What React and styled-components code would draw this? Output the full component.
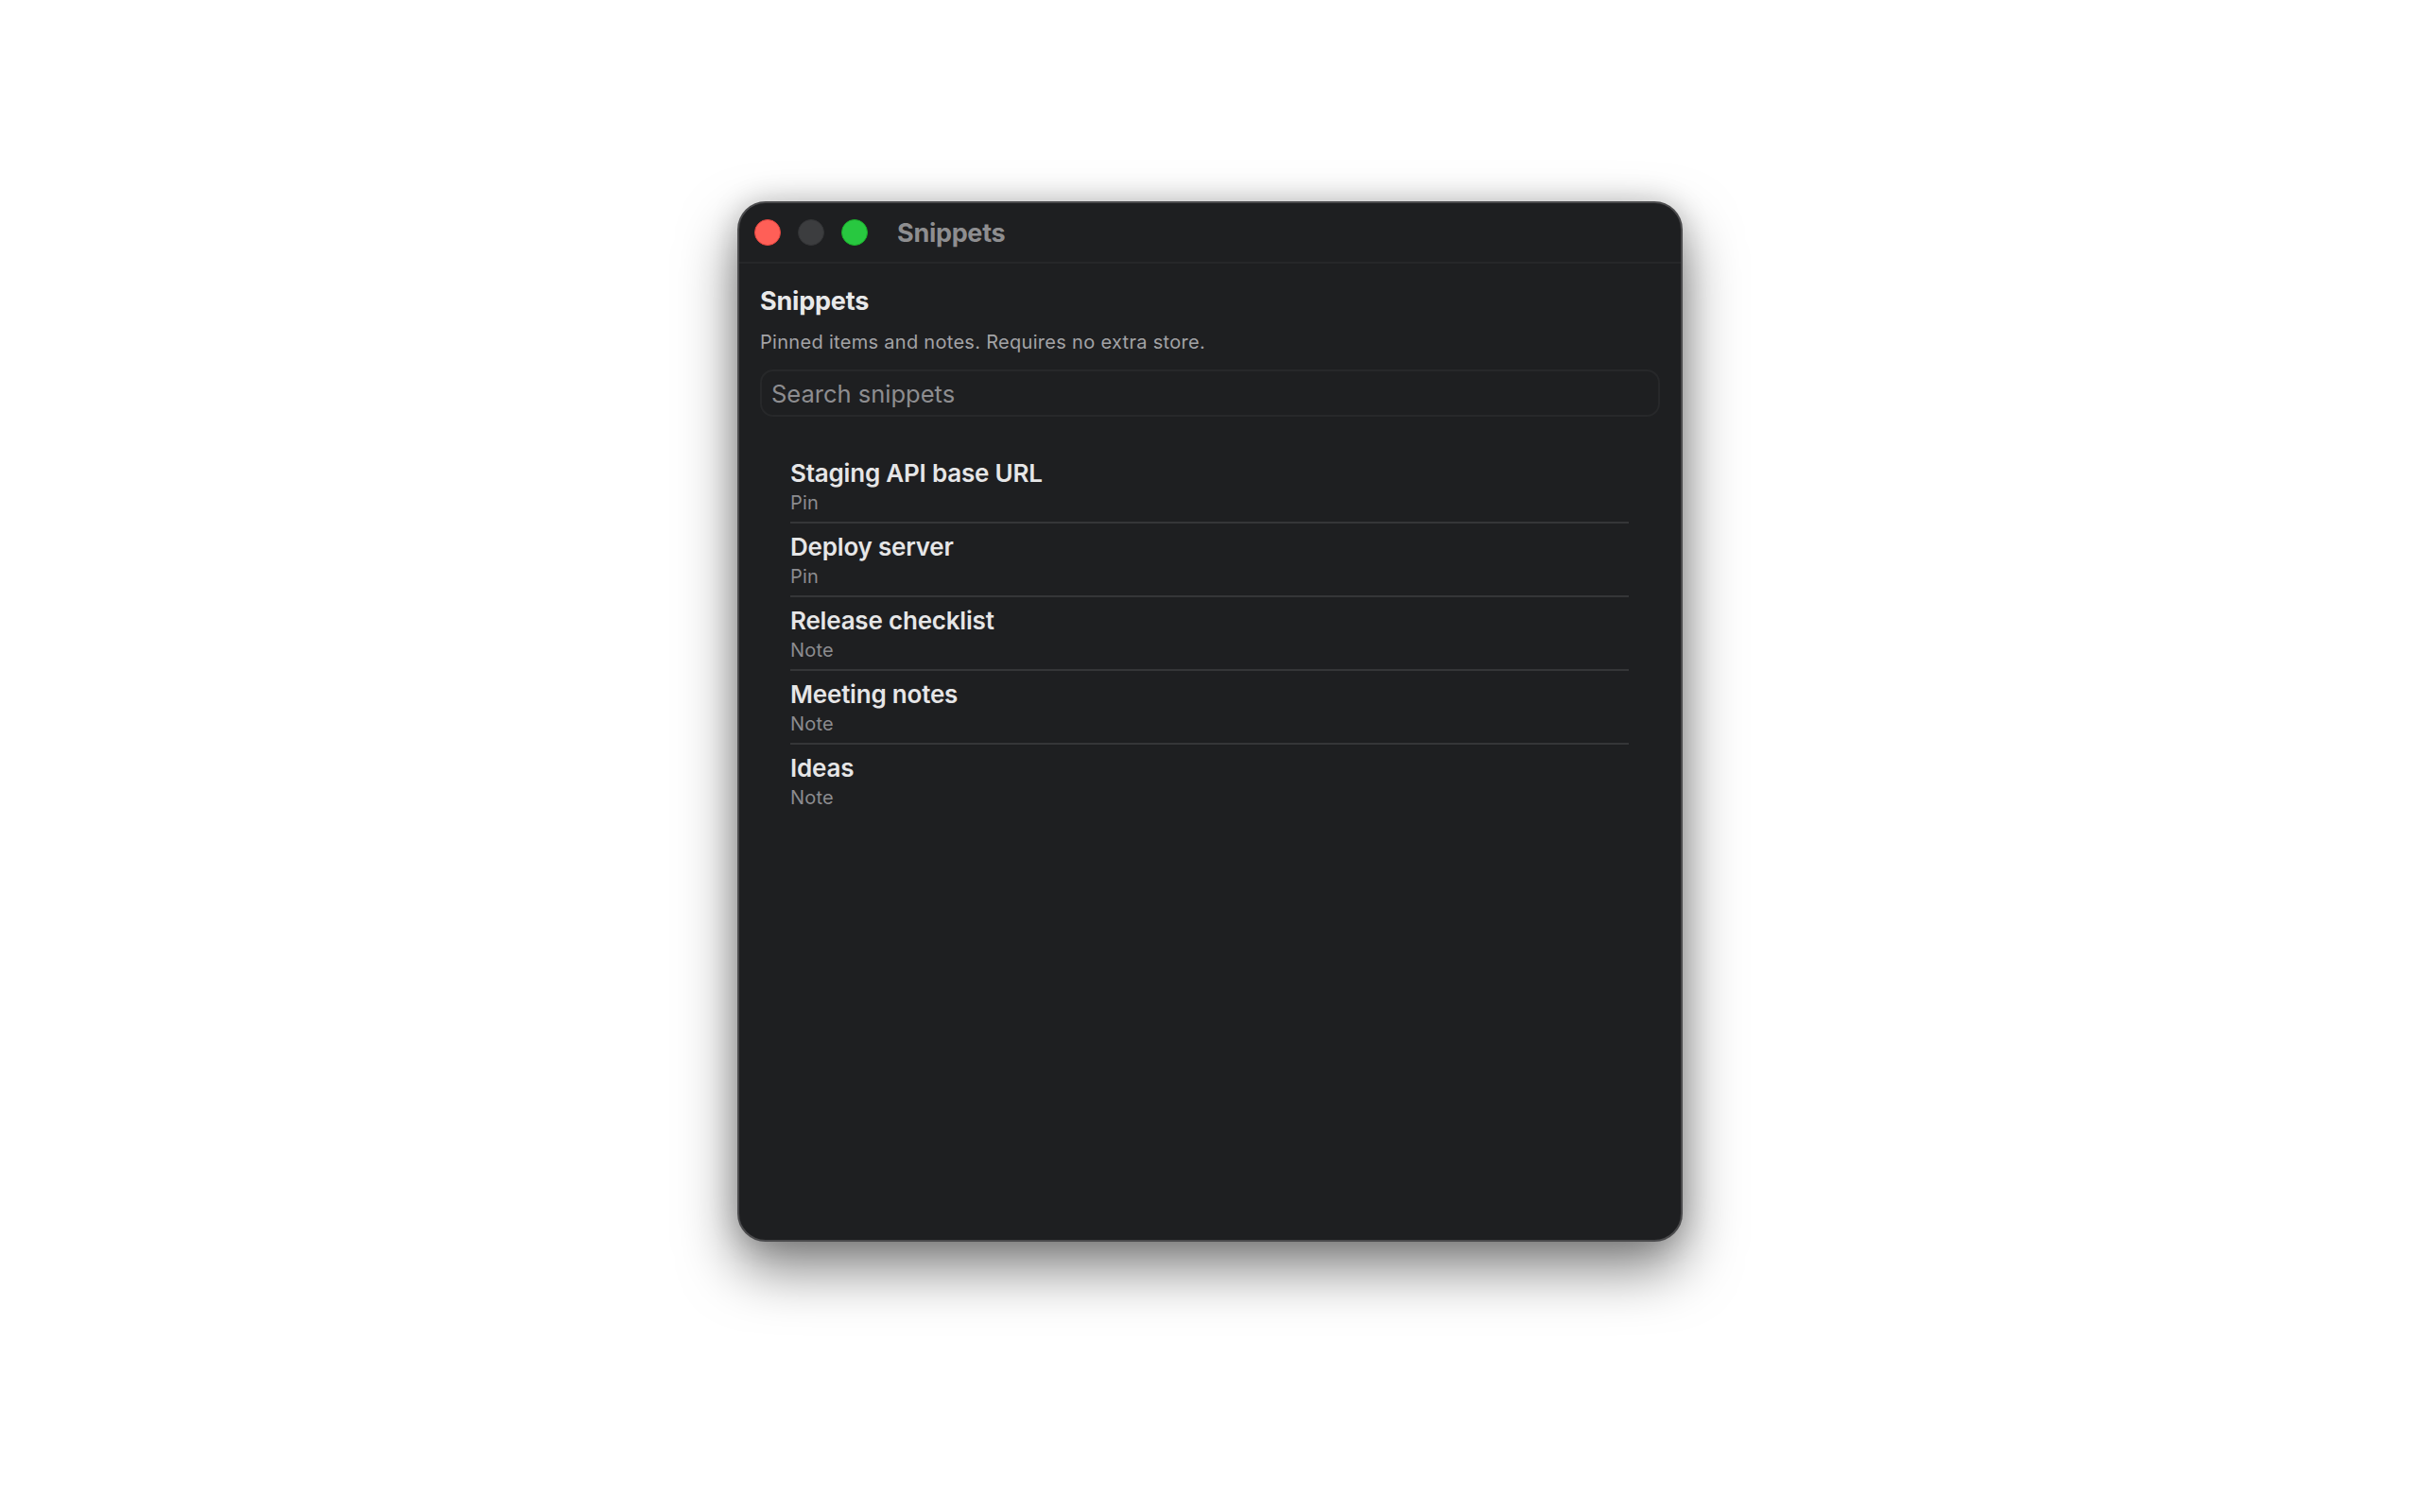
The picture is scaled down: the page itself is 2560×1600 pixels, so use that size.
import React from "react";
import styled, { createGlobalStyle } from "styled-components";

const Global = createGlobalStyle`
  html, body { margin: 0; padding: 0; background: #ffffff; }
  body { font-family: Inter, "Noto Sans", "Liberation Sans", sans-serif; -webkit-font-smoothing: antialiased; }
`;

const Page = styled.div`
  width: 2560px;
  height: 1600px;
  display: flex;
  justify-content: center;
  align-items: flex-start;
  padding-top: 213px;
  box-sizing: border-box;
  background: #ffffff;
`;

const Window = styled.div`
  width: 1000px;
  height: 1101px;
  box-sizing: border-box;
  background: #1e1f21;
  border: 2px solid #4a4a4c;
  border-radius: 30px;
  box-shadow: 0 28px 60px rgba(0, 0, 0, 0.5), 0 0 30px rgba(0, 0, 0, 0.18);
  display: flex;
  flex-direction: column;
  overflow: hidden;
`;

const TitleBar = styled.div`
  height: 62px;
  flex: 0 0 auto;
  display: flex;
  align-items: center;
  padding-left: 16px;
  border-bottom: 2px solid #262729;
`;

const Lights = styled.div`
  display: flex;
  gap: 18px;
  margin-right: 31px;
`;

const Light = styled.span`
  width: 28px;
  height: 28px;
  border-radius: 50%;
  box-sizing: border-box;
  background: ${(p) => p.$color};
  border: 1px solid ${(p) => p.$rim};
`;

const WindowTitle = styled.div`
  font-size: 27px;
  font-weight: 700;
  color: #8e8e90;
  letter-spacing: -0.3px;
`;

const Content = styled.div`
  flex: 1;
  padding: 23px 22px 0 22px;
  display: flex;
  flex-direction: column;
`;

const Heading = styled.h1`
  margin: 0;
  font-size: 27px;
  line-height: 33px;
  font-weight: 700;
  color: #e9e9ea;
  letter-spacing: -0.2px;
`;

const Subtitle = styled.p`
  margin: 15px 0 0 0;
  font-size: 20px;
  line-height: 24px;
  color: #a3a3a6;
  letter-spacing: 0.3px;
`;

const SearchBox = styled.input`
  margin-top: 17px;
  height: 50px;
  box-sizing: border-box;
  width: 100%;
  background: #1e1f21;
  border: 2px solid #27282a;
  border-radius: 14px;
  padding: 0 10px;
  font-family: inherit;
  font-size: 25.5px;
  color: #e0e0e0;
  outline: none;
  &::placeholder { color: #8d8d90; }
`;

const List = styled.ul`
  list-style: none;
  margin: 35px 0 0 0;
  padding: 0 33px 0 32px;
`;

const Row = styled.li`
  padding: 9px 0 8px 0;
  border-bottom: 2px solid ${(p) => (p.$last ? "transparent" : "#353638")};
  display: flex;
  flex-direction: column;
  gap: 3px;
`;

const RowTitle = styled.div`
  font-size: 26px;
  line-height: 32px;
  font-weight: 600;
  color: #e6e6e7;
  letter-spacing: -0.2px;
`;

const RowKind = styled.div`
  font-size: 20px;
  line-height: 24px;
  color: #8c8c8f;
  letter-spacing: 0.2px;
`;

const items = [
  { title: "Staging API base URL", kind: "Pin" },
  { title: "Deploy server", kind: "Pin" },
  { title: "Release checklist", kind: "Note" },
  { title: "Meeting notes", kind: "Note" },
  { title: "Ideas", kind: "Note" },
];

export default function App() {
  return (
    <>
      <Global />
      <Page>
        <Window>
          <TitleBar>
            <Lights>
              <Light $color="#ff5f57" $rim="#e0443e" />
              <Light $color="#3c3d3f" $rim="#333436" />
              <Light $color="#28c840" $rim="#1aab29" />
            </Lights>
            <WindowTitle>Snippets</WindowTitle>
          </TitleBar>
          <Content>
            <Heading>Snippets</Heading>
            <Subtitle>Pinned items and notes. Requires no extra store.</Subtitle>
            <SearchBox placeholder="Search snippets" />
            <List>
              {items.map((it, i) => (
                <Row key={it.title} $last={i === items.length - 1}>
                  <RowTitle>{it.title}</RowTitle>
                  <RowKind>{it.kind}</RowKind>
                </Row>
              ))}
            </List>
          </Content>
        </Window>
      </Page>
    </>
  );
}
